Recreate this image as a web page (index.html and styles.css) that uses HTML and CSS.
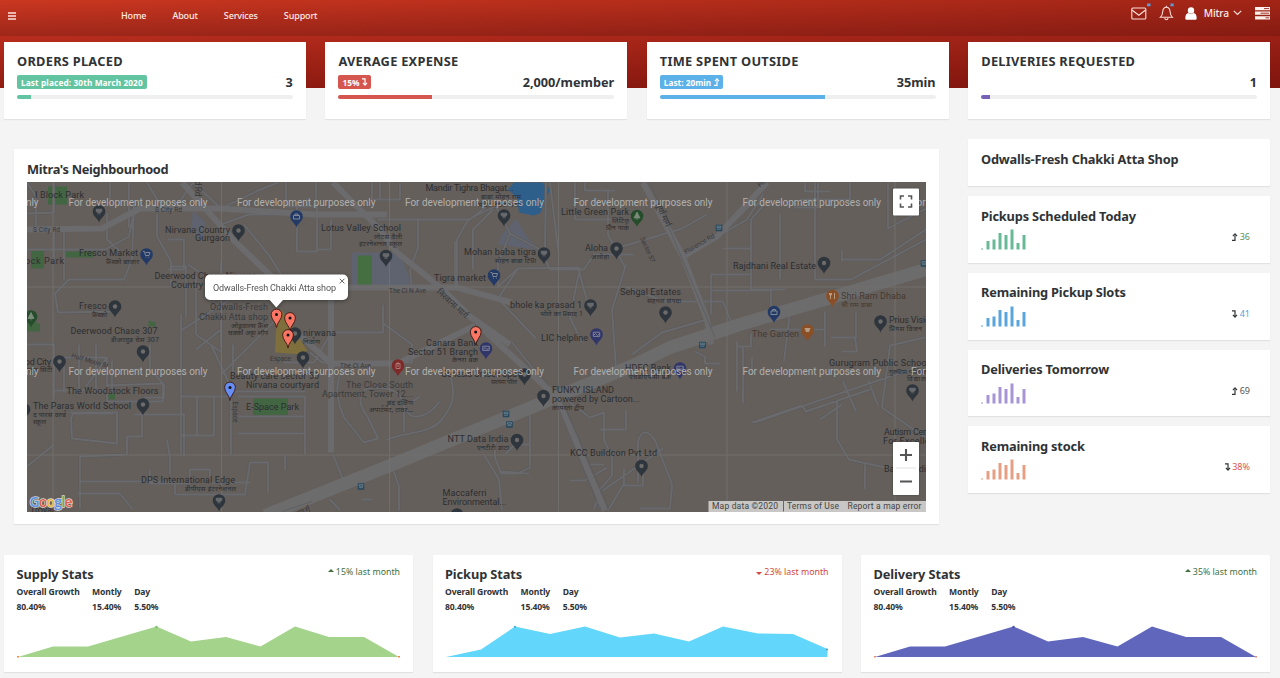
FILE: index.html
```html
<!DOCTYPE html>
<html lang="en">
<head>
<meta charset="utf-8">
<title>Mitra's Neighbourhood</title>
<link rel="stylesheet" href="styles.css">
</head>
<body>
<div class="page">
  <header class="hero">
    <nav class="nav">
      <svg class="burger" viewBox="0 0 8 8"><path d="M0 .9h8M0 3.9h8M0 6.9h8" stroke="#fbe3df" stroke-width="1.5"/></svg>
      <ul class="links"><li>Home</li><li>About</li><li>Services</li><li>Support</li></ul>
      <div class="tools">
        <svg class="mail" viewBox="0 0 20 18"><rect x=".8" y="5" width="14" height="11" rx="1" fill="none" stroke="#fbe0db" stroke-width="1.1"/><path d="M1 7l6.800 5.200L14.600 7" fill="none" stroke="#fbe0db" stroke-width="1.100"/><rect x="16" y="0.500" width="3.500" height="2.800" fill="#5b9bd8"/></svg>
        <svg class="bell" viewBox="0 0 16 18"><path d="M1.500 14.200C3.500 12.500 3.600 10.500 3.800 8.300 4 5.600 5.500 4.200 7.400 4.200s3.400 1.400 3.600 4.100c.2 2.200.3 4.200 2.300 5.900z" fill="none" stroke="#fbe0db" stroke-width="1.100"/><path d="M5.800 15c.2 2.300 3 2.300 3.200 0M7.400 2.800v1.400" fill="none" stroke="#fbe0db" stroke-width="1.100"/><rect x="11.500" y=".5" width="3.200" height="2.800" fill="#5b9bd8"/></svg>
        <svg class="user" viewBox="0 0 12 13"><circle cx="6" cy="3.500" r="3.200" fill="#fff"/><path d="M.3 11.500C.3 8 1.600 6.400 3.300 6.100 5 7.600 7 7.600 8.700 6.100c1.700.3 3 1.900 3 5.400 0 1-.8 1.300-1.500 1.300H1.800C1.100 12.800.3 12.500.3 11.500z" fill="#fff"/></svg>
        <span class="name">Mitra</span>
        <svg class="chev" viewBox="0 0 9 6"><path d="M.8.9l3.700 3.600L8.200.9" fill="none" stroke="#fbe0db" stroke-width="1.200"/></svg>
        <svg class="tasks" viewBox="0 0 15 13"><path d="M0 0h15v3.200H0zM0 4.600h15v3.200H0zM0 9.200h15v3.200H0z" fill="#fff1ee"/><path d="M9 1.600h5M5.500 6.200H14M10.500 10.800H14" stroke="#a03327"/></svg>
      </div>
    </nav>
  </header>

  <section class="kpis">
    <article class="card kpi"><h3>ORDERS PLACED</h3><div class="row"><span class="badge green wide">Last placed: 30th March 2020</span><b>3</b></div><div class="bar"><i class="green" style="width:5%"></i></div></article>
    <article class="card kpi"><h3>AVERAGE EXPENSE</h3><div class="row"><span class="badge red">15% <svg class="lvl" viewBox="0 0 5 8"><use href="#down"/></svg></span><b>2,000/member</b></div><div class="bar"><i class="red" style="width:34%"></i></div></article>
    <article class="card kpi"><h3>TIME SPENT OUTSIDE</h3><div class="row"><span class="badge blue">Last: 20min <svg class="lvl" viewBox="0 0 5 8"><use href="#up"/></svg></span><b>35min</b></div><div class="bar"><i class="blue" style="width:60%"></i></div></article>
    <article class="card kpi"><h3>DELIVERIES REQUESTED</h3><div class="row"><b>1</b></div><div class="bar"><i class="purple" style="width:3%"></i></div></article>
  </section>

  <section class="main">
    <article class="card mapcard">
      <h3 class="nb">Mitra's Neighbourhood</h3>
      <svg class="map" viewBox="27 182.500 899 329.500">
        <defs>
          <path id="up" d="M0 7.300h3V2.500M.9 3.200L3 .8l2 2.400" fill="none" stroke="currentColor" stroke-width="1.200"/>
          <path id="down" d="M0 .8h3v5M.9 4.800L3 7.200l2-2.400" fill="none" stroke="currentColor" stroke-width="1.200"/>
          <path id="drop" d="M0 11C-1 6.800-6.300 5-6.300 0A6.300 6.300 0 1 1 6.300 0C6.300 5 1 6.800 0 11z"/>
          <g id="pin"><use href="#drop" fill="#2e353c"/><circle r="2.200" fill="#6d6c6b"/></g>
          <g id="pinsq"><use href="#drop" fill="#2e353c"/><path d="M-3-2.500h6v2.500L0 2l-3-2zM-2 2.500h4" fill="#67696c" stroke="#67696c" stroke-width=".5"/></g>
          <g id="shop"><use href="#drop" fill="#233a66"/><path d="M-3.500-3h1.500l1 4h3.500l1-3h-4.500M-.8 2.700h.8M2 2.700h.8" fill="none" stroke="#7f8894"/></g>
          <g id="bag"><use href="#drop" fill="#233a66"/><path d="M-3-1h6v3.500h-6zM-1.500-1v-1.500h3V-1" fill="none" stroke="#7f8894"/></g>
          <g id="bank"><use href="#drop" fill="#30356a"/><path d="M-3.200-2.300h6.400v4.200h-6.400zM-3 1l2-2 2 2 2-2" fill="none" stroke="#7f8294"/></g>
          <g id="marker"><path d="M0 13C-.6 7.500-5.400 5-5.400 0A5.400 5.400 0 1 1 5.400 0C5.400 5 .6 7.500 0 13z" stroke="#3b1712" stroke-width=".9"/><circle r="1.500" fill="#111"/></g>
          <g id="bus"><rect x="-3.300" y="-3.300" width="6.600" height="6.600" rx=".5" fill="#26475d"/><path d="M-2-1.800h4v1.500h-4zM-2 1.200h4" fill="none" stroke="#73858f" stroke-width=".8"/></g>
          <path id="minor" d="M27 183l9 14v33M54 183v30l-27 1M110 183v25M129 228v-45M147 183l12 20h20l14-20M193 183l28 26 37-18 20-8M27 250h78l24-13 5-24M134 205l-2 55-8 20h-55l-14 14 3 19 62-1M64 228v53M107 213v27l13 12M54 230v35M157 214v23l14 25v25M168 240h16v30h-16M170 267h16v50M188 265l33 22 50 6 26-19M196 275v60l26 18M221 263v85M221 225l28-10h37M244 225l26 32 12 20M286 183v24h30v-24M297 207v45h20v-45M372 183v17h28v-17M380 200v-17M378 220h90l33-16M418 220v28l-8 22 2 20M317 220v30h14v-30M457 290v-50l10-18 29-22M473 270v-40l20-20M455 242v47M496 207l14 27 30 16 10 20h34l10-15h40M510 234l-12 30v24M498 287l20-18 60-1 12 44M518 269l-20 30 38 40M545 249l1-66M550 183l8 67M575 183v37h50M585 183v8h30M608 190v45l17 33M626 265l-14 45 4 60M580 268l-10 50 12 25M622 247l60-18 25-14M625 287l40 15h58l8 20M687 255l60-35 16-25M711 275h40v-55l13-15h-13l-35 35M723 249h28M711 275v40M751 270v20h35M780 215v65M711 291h60v30l-40 12M805 183v9h25M818 183v25h-24M888 183v46l38-20M842 260h38l46-30M842 250v12M815 280h36l75-40M815 183v97M800 200h50v-17M747 322l30-15M707 320l-45 13-30 22M790 312l-6 50M737 342v50M743 347v57M737 347h14v-13M770 330h55M825 312v35M842 352h15l-2-14h-24M856 312v27M925 338l-35 8-8 62 43 30M925 365l-170 58M752 423l50-17 4 6 64-22M837 400v40l12 20 36 8M843 382l13 30M868 380l10 26M820 420l22-15M865 465v25M752 358v18"/>
          <path id="minor2" d="M27 345h27v55M52 358h55v28l56-2v18h-56v-18M64 358v35M79 345v45M96 345v45M107 358l-24 33M54 391h58v-30M54 445l-27 22M70 413h47v31l-45-5-1-20 2-5h40M142 416v21h-15v18l-47 2v52M134 415h50v42M150 345v25l14 15v13h-20M181 315v100M181 397h50v58M197 398v38M214 398v38M181 436h33M181 455v-58M211 345l22 47h72M238 397h67v58M238 417h67M238 434h67M285 456v15M80 482h95v13h70l5-32h18v30M78 494h42l13 16M150 470v14h40v-14h20v13h40M167 440l3 17v18M233 375v-30M181 331l60-38M196 350l25-20M221 375l60-60M284 363h30l17-30h52v-28M310 353l12 10h90v-18l-30-22M344 363c-10 25-8 35 0 55l20 25 14-4-10-21c-12-15-8-27 0-29s24 0 30 5c8 7 5 25 20 23s22-17 22-15M404 433v-26l16-10M450 373c5 22 5 30-8 47-14 16-40 12-57 21M333 455l12 30M392 467l7 20v24M330 500l10 11M362 500h10M484 455l15 25 3 31M495 438v20l6 16h17l12-6v-55M529 474l-29-2M505 455l10-10h15M512 343l50 62 18 40 20 65M570 403l20 15 14-5v28l8 15v20l-12 14-6 20M600 430h26v-20M607 468l-22 13h-15M590 465h14M603 491l60-42M640 509h30l2-24-16-42c-7-13-15-14-18 0v40M608 511l15-25h20v-17h-8M624 485v-16M695 352l10 5v7h15"/>
        </defs>
        <rect x="26" y="182" width="901" height="331" fill="#645f5b"/>
        <g opacity=".9">
          <path d="M352 253h47l14 33h-61zM516 219l12 20 11 10-4 1-37-5 4-10zM193 211l12 12-2 20-12-13z" fill="#5e6472"/>
          <path d="M48 187h19v18H48zM31 251h13v18H31zM66 252h28v6H66zM27 317v15h13v-7zM253 399h35v18h-35zM105 394h10v6h-10zM149 321l7 2v4h-8z" fill="#3f6740"/>
          <path d="M358 256h14v30h-14z" fill="#42713f"/>
          <path d="M514 183h28l8 7-10 24-7 2-14-3-2-15-9-8z" fill="#285f90"/>
          <path d="M277 313l5-2 25 40-4 4-28-2z" fill="#83713a"/>
        </g>
        <g fill="none" stroke-linejoin="round">
          <g stroke="#5a5a5d" stroke-width="3"><use href="#minor"/><use href="#minor2"/></g>
          <g stroke="#6a696b" stroke-width="1.900"><use href="#minor"/><use href="#minor2"/></g>
          <g stroke="#6b6a6c" stroke-width="6">
            <path d="M27 230l75-1 38-20h80l95 6h72M182 183l52 58 50 48M333 183l44 44 20 26 46 37 27 27 40 28M483 330l73 67 15 35 34 79M643 183l40 74 24 63 4 25M683 257l34-20 50-54M310 288h147l54 15M331 290v80M300 336l31 28h67l77-38M331 363v90"/>
          </g>
          <path d="M265 516l125-50 153-63 90-37 37-18 70-23 186-55" stroke="#6d6c6d" stroke-width="13"/>
          <path d="M555 400l45 110M562 400l47 110M650 183l65 155M282 512l30-10" stroke="#585a5e" stroke-width=".7"/>
        </g>
        <path d="M53 182v330M221.500 182v330M389.500 182v330M558.500 182v330M727 182v330M895 182v330M26 287.500h900M26 455.500h900" stroke="#747270" stroke-width=".8"/>

        <g class="lab">
          <text x="35" y="198" textLength="49">I Block Park</text>
          <text x="16" y="264" textLength="48">Block Park</text>
          <text x="230" y="233" text-anchor="end" textLength="65">Nirvana Country</text>
          <text x="230" y="241.500" text-anchor="end" textLength="35">Gurgaon</text>
          <text x="138" y="256" text-anchor="end" textLength="59">Fresco Market</text>
          <text class="h" x="139" y="264" text-anchor="end" textLength="33">फ्रेस्को बाजार</text>
          <text x="154.500" y="279.500" textLength="102">Deerwood Chase Nirvana</text>
          <text x="171" y="288.500" textLength="32">Country</text>
          <text x="107" y="309" text-anchor="end" textLength="28">Fresco</text>
          <text class="h" x="107" y="317" text-anchor="end" textLength="15">फ्रेस्को</text>
          <text x="268" y="310.500" text-anchor="end" textLength="58" class="soft">Odwalls-Fresh</text>
          <text x="268" y="320" text-anchor="end" textLength="69" class="soft">Chakki Atta shop</text>
          <text class="h" x="268" y="328" text-anchor="end" textLength="37">ओडवाल्स फ्रेश</text>
          <text class="h" x="268" y="335" text-anchor="end" textLength="40">चक्की अट्टा शॉप</text>
          <text x="70.500" y="334" textLength="87">Deerwood Chase 307</text>
          <text class="h" x="111" y="342" textLength="48">डीअरवुड चेस 307</text>
          <text x="303" y="336.500" textLength="33">nirwana</text>
          <text class="h" x="303" y="344" textLength="17">निर्वाण</text>
          <text x="51" y="365" text-anchor="end" textLength="37">Good City</text>
          <text class="h" x="52" y="372" text-anchor="end" textLength="32">ग्रीनवुड सिटी</text>
          <text x="66.500" y="394" textLength="92">The Woodstock Floors</text>
          <text x="33" y="409" textLength="98">The Paras World School</text>
          <text class="h" x="33" y="417" textLength="33">द पारस वर्ल्ड</text>
          <text class="h" x="33" y="424" textLength="13">स्कूल</text>
          <text x="230" y="379.500" textLength="89">Beauty care sector 50</text>
          <text x="246" y="388.500" textLength="73">Nirvana courtyard</text>
          <text x="246" y="410" textLength="53">E-Space Park</text>
          <text x="141" y="483" textLength="94">DPS International Edge</text>
          <text class="h" x="236" y="491" text-anchor="end" textLength="51">डीपीएस इंटरनेशनल</text>
          <text x="425.500" y="191.500" textLength="88">Mandir Tighra Bhagat...</text>
          <text class="h" x="521" y="199" text-anchor="end" textLength="40">बाबा मोहन राम</text>
          <text class="h" x="521" y="207" text-anchor="end" textLength="43">मंदिर तिघरा भगत</text>
          <text x="321" y="231.500" textLength="80">Lotus Valley School</text>
          <text class="h" x="402" y="239" text-anchor="end" textLength="28">लोटस वैली</text>
          <text class="h" x="402" y="246" text-anchor="end" textLength="43">इंटरनेशनल स्कूल</text>
          <text x="464" y="255.500" textLength="72">Mohan baba tigra</text>
          <text class="h" x="536" y="263" text-anchor="end" textLength="41">मोहन बाबा टिग्रा</text>
          <text x="434" y="281" textLength="52">Tigra market</text>
          <text x="561" y="215" textLength="68">Little Green Park</text>
          <text class="h" x="629" y="223" text-anchor="end" textLength="17">लिटिल</text>
          <text class="h" x="629" y="230" text-anchor="end" textLength="23">ग्रीन पार्क</text>
          <text x="585" y="251.500" textLength="23">Aloha</text>
          <text class="h" x="609" y="259" text-anchor="end" textLength="18">अलोहा</text>
          <text x="510" y="308" textLength="72">bhole ka prasad 1</text>
          <text class="h" x="583" y="316" text-anchor="end" textLength="43">भोले का प्रसाद 1</text>
          <text x="620" y="295" textLength="61">Sehgal Estates</text>
          <text class="h" x="681" y="303" text-anchor="end" textLength="34">सहगल संपदा</text>
          <text x="733" y="269" textLength="83">Rajdhani Real Estate</text>
          <text class="food" x="841" y="299" textLength="65">Shri Ram Dhaba</text>
          <text class="h food" x="841" y="307" textLength="31">श्री राम ढाबा</text>
          <text class="food" x="752" y="337" textLength="47">The Garden</text>
          <text x="889" y="323.500" textLength="46">Prius Vision</text>
          <text class="h" x="889" y="331" textLength="33">प्रियस विजन</text>
          <text x="541" y="341" textLength="47">LIC helpline</text>
          <text x="426" y="346" textLength="52">Canara Bank</text>
          <text x="408" y="355" textLength="70">Sector 51 Branch</text>
          <text class="h" x="478" y="362" text-anchor="end" textLength="26">केनरा बैंक</text>
          <text x="441" y="377.500" textLength="76">Genesis Unisex Spa</text>
          <text class="h" x="517" y="384" text-anchor="end" textLength="26">सलमा पॉल</text>
          <text class="soft" x="346" y="388" textLength="67">The Close South</text>
          <text class="soft" x="322" y="397" textLength="91">Apartment, Tower 12...</text>
          <text class="h" x="413" y="405" text-anchor="end" textLength="26">बंद दक्षिण</text>
          <text class="h" x="413" y="412" text-anchor="end" textLength="44">अपार्टमेंट, टावर...</text>
          <text x="552" y="393" textLength="62">FUNKY ISLAND</text>
          <text x="552" y="402.500" textLength="88">powered by Cartoon...</text>
          <text class="h" x="552" y="410" textLength="32">कायरता द्वीप</text>
          <text x="447.500" y="442.500" textLength="61">NTT Data India</text>
          <text class="h" x="509" y="450" text-anchor="end" textLength="32">एनटीटी डाटा</text>
          <text x="570" y="456" textLength="87">KCC Buildcon Pvt Ltd</text>
          <text x="442.500" y="496" textLength="44">Maccaferri</text>
          <text x="442.500" y="505" textLength="64">Environmental...</text>
          <text x="625" y="371" textLength="46">HDFC Bank</text>
          <text class="h" x="671" y="379" text-anchor="end" textLength="42">एचडीएफसी बैंक</text>
          <text x="829" y="366.500" textLength="100">Gurugram Public School</text>
          <text class="h" x="889" y="374" textLength="38">गुरुग्राम पब्लिक</text>
          <text class="h" x="907" y="381" textLength="24">विद्यालय</text>
          <text x="884" y="435.500" textLength="54">Autism Centre</text>
          <text x="883" y="444.500" textLength="62">For Excellence</text>
          <text x="884" y="472" textLength="53">Balaji Medical</text>
          <text x="30" y="513" textLength="24">Troyal</text>
        </g>
        <g class="road">
          <text x="155" y="212" textLength="27">S City Rd</text><text x="33" y="232" textLength="27">S City Rd</text>
          <text x="389" y="293" textLength="37">The Cl N Ave</text><text x="340" y="368" textLength="31">The Cl Ave</text><text x="270" y="361" textLength="21">Espace</text>
          <text transform="translate(71 358) rotate(16)" textLength="38">Half Moon St</text>
          <text transform="translate(233 402) rotate(90)" textLength="21">Espace</text>
          <text transform="translate(686 255) rotate(-31)" textLength="34">Florence Rd</text>
          <text transform="translate(760 188) rotate(-42)" textLength="33">Florence Rd</text>
          <text transform="translate(640 239) rotate(65)" textLength="27">Sector 57</text>
          <text class="big" transform="translate(195 166) rotate(90)" textLength="31">Rapid Rd</text>
          <text class="big" transform="translate(436 293) rotate(42)" textLength="39">निरवाना मार्ग</text>
          <text class="big" transform="translate(655 204) rotate(66)" textLength="26">सूर्या मार्ग</text>
          <text class="big" transform="translate(299 517) rotate(-23)" textLength="13">मार्ग</text>
        </g>

        <use href="#pinsq" x="99" y="212"/><use href="#pin" x="238.500" y="231"/><use href="#bag" x="296.500" y="217"/><use href="#shop" x="146.500" y="255"/><use href="#pin" x="115" y="307"/><use href="#pin" x="143" y="352"/><use href="#pin" x="59.500" y="362"/><use href="#pin" x="143" y="405"/><use href="#pin" x="24" y="410"/><use href="#pinsq" x="219" y="501"/><use href="#pin" x="303" y="358"/><use href="#pin" x="295" y="334"/>
        <use href="#pinsq" x="504" y="216"/><use href="#pinsq" x="386" y="256.500"/><use href="#pinsq" x="544" y="254"/><use href="#shop" x="494" y="276"/><use href="#pin" x="616.500" y="249"/><use href="#pinsq" x="590.500" y="306"/><use href="#bank" x="596.500" y="335"/><use href="#pin" x="665.500" y="313"/><use href="#pin" x="824" y="263.500"/><use href="#bag" x="774" y="312.500"/><use href="#pin" x="880.500" y="322"/><use href="#bank" x="486" y="349"/><use href="#pin" x="524.500" y="375"/><use href="#pin" x="543.500" y="396.500"/><use href="#pin" x="517" y="440.500"/><use href="#pin" x="641.500" y="466.500"/><use href="#bank" x="680" y="369"/><use href="#pinsq" x="912.500" y="391"/><use href="#pin" x="457" y="515"/>
        <g transform="translate(637 216.500)"><use href="#drop" fill="#254c2b"/><path d="M0-4l3 6H-3zM0 2v2" fill="#7b8b79" stroke="#7b8b79" stroke-width=".8"/></g>
        <g transform="translate(31 317)"><use href="#drop" fill="#254c2b"/><path d="M0-4l3 6H-3zM0 2v2" fill="#7b8b79" stroke="#7b8b79" stroke-width=".8"/></g>
        <g transform="translate(832.500 296.500)"><use href="#drop" fill="#8a4f27"/><path d="M-2-3v6M2-3v6M-3-3v2h2v-2" fill="none" stroke="#b79b80"/></g>
        <g transform="translate(807.500 331)"><use href="#drop" fill="#8a4f27"/><path d="M-3-2.500h6l-1.500 4h-3z" fill="#b79b80"/></g>
        <g transform="translate(398 366)"><use href="#drop" fill="#7d2a2a"/><path d="M-2-2h4v5h-4zM0-3.500v3M-1 .5h2" fill="none" stroke="#ae7774"/></g>
        <use href="#bus" x="719" y="228.500"/><use href="#bus" x="924" y="264"/><use href="#bus" x="506" y="414.500"/><use href="#bus" x="509.500" y="425"/><use href="#bus" x="702.500" y="345.500"/><use href="#bus" x="361" y="487"/>

        <g class="dev">
          <text x="26" y="206" textLength="12.500">nly</text><text x="68.500" y="206" textLength="139">For development purposes only</text><text x="237" y="206" textLength="138.500">For development purposes only</text><text x="405" y="206" textLength="139">For development purposes only</text><text x="573.500" y="206" textLength="139">For development purposes only</text><text x="742.500" y="206" textLength="138.500">For development purposes only</text><text x="911" y="206">For</text>
          <text x="26" y="375" textLength="12.500">nly</text><text x="68.500" y="375" textLength="139">For development purposes only</text><text x="237" y="375" textLength="138.500">For development purposes only</text><text x="405" y="375" textLength="139">For development purposes only</text><text x="573.500" y="375" textLength="139">For development purposes only</text><text x="742.500" y="375" textLength="138.500">For development purposes only</text><text x="911" y="375">For</text>
        </g>

        <g fill="#fa7564"><use href="#marker" x="290" y="318.500"/><use href="#marker" x="288" y="335.500"/><use href="#marker" x="276.500" y="315"/><use href="#marker" x="475.700" y="332.500"/></g>
        <use href="#marker" x="230" y="388" fill="#668cf5"/>

        <g class="bubble"><path d="M210 275h133a5 5 0 0 1 5 5v15.500a5 5 0 0 1-5 5h-60l-6.700 7.500-6.600-7.500h-59.700a5 5 0 0 1-5-5V280a5 5 0 0 1 5-5z" fill="#fff"/><text x="213" y="291" textLength="123">Odwalls-Fresh Chakki Atta shop</text><path d="M339.800 279.300l4.600 4.600m0-4.600l-4.600 4.600" stroke="#555" stroke-width=".9"/></g>

        <g class="ctl"><rect x="893" y="189" width="26" height="27" rx="1" fill="#fff"/><path d="M900.500 200v-3.500h3.500M908 196.500h3.500v3.500M911.500 204v3.500H908M904 207.500h-3.500V204" fill="none" stroke="#555" stroke-width="1.600"/><rect x="893" y="442.500" width="26" height="53" rx="1" fill="#fff"/><path d="M896 468.500h20" stroke="#e2e2e2"/><path d="M900 455.500h12M906 449.500v12M900 482h12" stroke="#555" stroke-width="2.100"/></g>

        <rect x="708.500" y="501.500" width="218" height="11" fill="#c8c7c5"/>
        <path d="M783.500 501v11" stroke="#666"/>
        <g class="terms"><text x="712" y="509" textLength="66">Map data ©2020</text><text x="787" y="509" textLength="52">Terms of Use</text><text x="847.500" y="509" textLength="74">Report a map error</text></g>
        <text class="goog" x="29.500" y="507" textLength="43"><tspan fill="#5f8fe0">G</tspan><tspan fill="#e0604f">o</tspan><tspan fill="#e8b93c">o</tspan><tspan fill="#5f8fe0">g</tspan><tspan fill="#5fae6a">l</tspan><tspan fill="#e0604f">e</tspan></text>
      </svg>
    </article>

    <aside class="side">
      <article class="card s0"><h3>Odwalls-Fresh Chakki Atta Shop</h3></article>
      <article class="card s1 c-green"><h3>Pickups Scheduled Today</h3><div class="row"><svg class="spark" viewBox="0 0 46 21"><use href="#bars"/></svg><p><svg class="lvl" viewBox="0 0 5 8"><use href="#up"/></svg><em>36</em></p></div></article>
      <article class="card s1 c-blue"><h3>Remaining Pickup Slots</h3><div class="row"><svg class="spark" viewBox="0 0 46 21"><use href="#bars"/></svg><p><svg class="lvl" viewBox="0 0 5 8"><use href="#down"/></svg><em>41</em></p></div></article>
      <article class="card s1 c-purple"><h3>Deliveries Tomorrow</h3><div class="row"><svg class="spark" viewBox="0 0 46 21"><use href="#bars"/></svg><p><svg class="lvl" viewBox="0 0 5 8"><use href="#up"/></svg><em>69</em></p></div></article>
      <article class="card s1 c-orange"><h3>Remaining stock</h3><div class="row"><svg class="spark" viewBox="0 0 46 21"><defs><path id="bars" d="M0 19.500h2v1H0zM5.500 12h3v8.500h-3zM11.500 10.500h3v10h-3zM17.500 4h3v16.500h-3zM23.500 6h3v14.500h-3zM29.500.500h3v20h-3zM35.500 14h3v6.500h-3zM41.500 6h3v14.500h-3z"/></defs><use href="#bars"/></svg><p><svg class="lvl" viewBox="0 0 5 8"><use href="#down"/></svg><em>38%</em></p></div></article>
    </aside>
  </section>

  <section class="stats">
    <article class="card stat">
      <div class="head"><h3>Supply Stats</h3><span class="good"><i class="tri"></i>15% last month</span></div>
      <dl><div><dt>Overall Growth</dt><dd>80.40%</dd></div><div><dt>Montly</dt><dd>15.40%</dd></div><div><dt>Day</dt><dd>5.50%</dd></div></dl>
      <svg class="area" viewBox="0 0 383 33" preserveAspectRatio="none"><path d="M1 32L36 21.500H71L139.500 1.500 174 16.500 209 12 243.500 21.500 278 1.500 312 12H347L382 32z" fill="#a4d38b"/><path d="M0 31h2v1.500H0zM381 31h2v1.500h-2z" fill="#ef8b4d"/><circle cx="139.500" cy="2" r="1.200" fill="#7fbd6a"/></svg>
    </article>
    <article class="card stat">
      <div class="head"><h3>Pickup Stats</h3><span class="bad"><i class="tri down"></i>23% last month</span></div>
      <dl><div><dt>Overall Growth</dt><dd>80.40%</dd></div><div><dt>Montly</dt><dd>15.40%</dd></div><div><dt>Day</dt><dd>5.50%</dd></div></dl>
      <svg class="area" viewBox="0 0 383 33" preserveAspectRatio="none"><path d="M1 32L36 24.500 70 1.500 105 9 140 1.500 175 12.500 209 8.500 244 16.500 278 1.500 313 8.500 348 9 382.500 24V32z" fill="#63d6fc"/><circle cx="70" cy="2" r="1.200" fill="#4cb9e0"/><circle cx="382" cy="24.500" r="1" fill="#4a9bb8"/></svg>
    </article>
    <article class="card stat">
      <div class="head"><h3>Delivery Stats</h3><span class="good"><i class="tri"></i>35% last month</span></div>
      <dl><div><dt>Overall Growth</dt><dd>80.40%</dd></div><div><dt>Montly</dt><dd>15.40%</dd></div><div><dt>Day</dt><dd>5.50%</dd></div></dl>
      <svg class="area" viewBox="0 0 383 33" preserveAspectRatio="none"><path d="M1 32L36 21.500H71L139.500 1.500 174 16.500 209 12 243.500 21.500 278 1.500 312 12H347L382 32z" fill="#6066bb"/><path d="M0 31h2v1.500H0zM381 31h2v1.500h-2z" fill="#ef8b6d"/><circle cx="139.500" cy="2" r="1.200" fill="#4d52a5"/></svg>
    </article>
  </section>
</div>
</body>
</html>
```
FILE: styles.css
```css
* { box-sizing: border-box; margin: 0; padding: 0; }
body { background: #f4f4f4; color: #303336; font-family: "Noto Sans", "Open Sans", sans-serif; }
svg { display: block; overflow: visible; }
.page { width: 1280px; height: 678px; overflow: hidden; }
.hero { height: 87.5px; background: linear-gradient(90deg, rgba(90,0,0,0), rgba(90,5,5,.32)), linear-gradient(180deg, #b82d1d 36px, #901c12 100%); }
.nav { height: 36px; display: flex; align-items: center; padding: 0 10px 0 8px; background: linear-gradient(90deg, rgba(90,0,0,0), rgba(90,5,5,.36)), linear-gradient(180deg, #cb3720, #9e271a); color: #fdebe8; font-size: 9px; font-weight: 500; }
.burger { width: 8px; height: 8px; margin-top: -5px; }
.links { display: flex; list-style: none; margin-left: 105px; gap: 26px; margin-top: -6px; letter-spacing: -.13px; }
.tools { margin-left: auto; display: flex; align-items: center; margin-top: -10px; }
.mail { width: 20px; height: 18px; margin-right: 8px; margin-top: -3px; }
.bell { width: 16px; height: 18px; margin-right: 10px; margin-top: -3px; }
.user { width: 12px; height: 13px; margin-right: 7px; }
.name { font-size: 10.200px; letter-spacing: -.15px; }
.chev { width: 9px; height: 6px; margin: 0 13px 0 4px; }
.tasks { width: 15px; height: 13px; }
.card { background: #fff; box-shadow: 0 1px 1px rgba(0,0,0,.07); }
h3 { font-size: 12.800px; line-height: 16px; font-weight: 700; white-space: nowrap; letter-spacing: -.1px; }
.nb { letter-spacing: -.32px; }
.row { display: flex; align-items: center; justify-content: space-between; }
.kpis { display: grid; grid-template-columns: repeat(4, 1fr); gap: 19.700px; margin: -45.500px 10px 0 4px; }
.kpi { height: 77px; padding: 11px 13px 0; }
.kpi h3 { letter-spacing: .27px; }
.kpi .row { height: 16px; margin-top: 5px; }
.kpi b { font-size: 12.700px; margin-left: auto; }
.badge { height: 13.500px; border-radius: 2px; padding: 0 4px; color: #fff; font-size: 8.300px; line-height: 13px; font-weight: 700; white-space: nowrap; display: flex; align-items: center; gap: 3px; }
.wide { letter-spacing: .1px; }
.lvl { width: 5px; height: 8px; flex: none; }
.green { background: #62c4a0; }
.red { background: #d4564f; }
.blue { background: #5cb1e8; }
.purple { background: #7562b5; }
.bar { height: 4px; margin-top: 5px; background: #efefef; border-radius: 2px; overflow: hidden; }
.bar i { display: block; height: 4px; }
.main { display: flex; justify-content: space-between; margin: 20px 10px 0 14px; height: 386px; }
.mapcard { width: 925px; height: 375px; margin-top: 10px; padding: 12px 13px 0; }
.map { width: 899px; height: 329.500px; margin-top: 5px; overflow: hidden; }
.lab { font: 9px Roboto, sans-serif; fill: #2c2e31; }
.lab .soft { fill: #393b3e; }
.lab .food { fill: #463a33; }
.lab .h { font: 7px "Noto Sans", "Noto Sans Devanagari", sans-serif; }
.road { font: 6.500px Roboto, sans-serif; fill: #38393c; }
.road .big { font: 8.500px Roboto, "Noto Sans", sans-serif; }
.dev { font: 10px Roboto, sans-serif; fill: #b1afad; }
.bubble { filter: drop-shadow(0 1px 2px rgba(0,0,0,.4)); font: 9px Roboto, sans-serif; fill: #555; }
.ctl { filter: drop-shadow(0 0 1px rgba(0,0,0,.3)); }
.terms { font: 8.500px Roboto, sans-serif; fill: #444; }
.goog { font: 600 14px "Open Sans", sans-serif; stroke: #d6d6d6; stroke-width: 1.400px; paint-order: stroke; }
.side { width: 302.500px; display: flex; flex-direction: column; gap: 10px; }
.side .card { padding: 12px 20px 0 13.500px; }
.side h3 { letter-spacing: -.18px; }
.s0 { height: 47px; }
.s1 { height: 66.800px; }
.side .s1 { padding-top: 11.500px; }
.s1 .row { margin-top: 5.500px; align-items: flex-start; }
.spark { width: 46px; height: 21px; }
.side p { display: flex; align-items: center; gap: 2.500px; font-size: 9px; line-height: 12px; margin-top: 2px; }
em { font-style: normal; }
.c-green .spark { fill: #68b995; } .c-green em { color: #5f8f58; }
.c-blue .spark { fill: #5aa5db; } .c-blue em { color: #5b9bd8; }
.c-purple .spark { fill: #a795d5; } .c-purple em { color: #555; }
.c-orange .spark { fill: #e5a084; } .c-orange em { color: #dd554d; }
.stats { display: grid; grid-template-columns: repeat(3, 1fr); gap: 19.500px; margin: 30px 10px 0 4px; }
.stat { height: 117px; padding: 11px 13px 0 12.500px; }
.head { display: flex; justify-content: space-between; }
.head span { font-size: 8.800px; line-height: 13px; display: flex; align-items: center; gap: 2px; height: 13px; }
.good { color: #41713f; }
.bad { color: #d2473e; }
.tri { border: 3px solid transparent; border-top: 0; border-bottom: 3px solid currentColor; margin-top: -4px; }
.tri.down { border-bottom: 0; border-top: 3px solid currentColor; margin-top: 2px; }
dl { display: flex; gap: 12.500px; font-size: 8.600px; font-weight: 700; line-height: 15px; margin-top: 3px; letter-spacing: -.12px; }
.area { width: 383px; height: 33px; margin-top: 10px; }
```
